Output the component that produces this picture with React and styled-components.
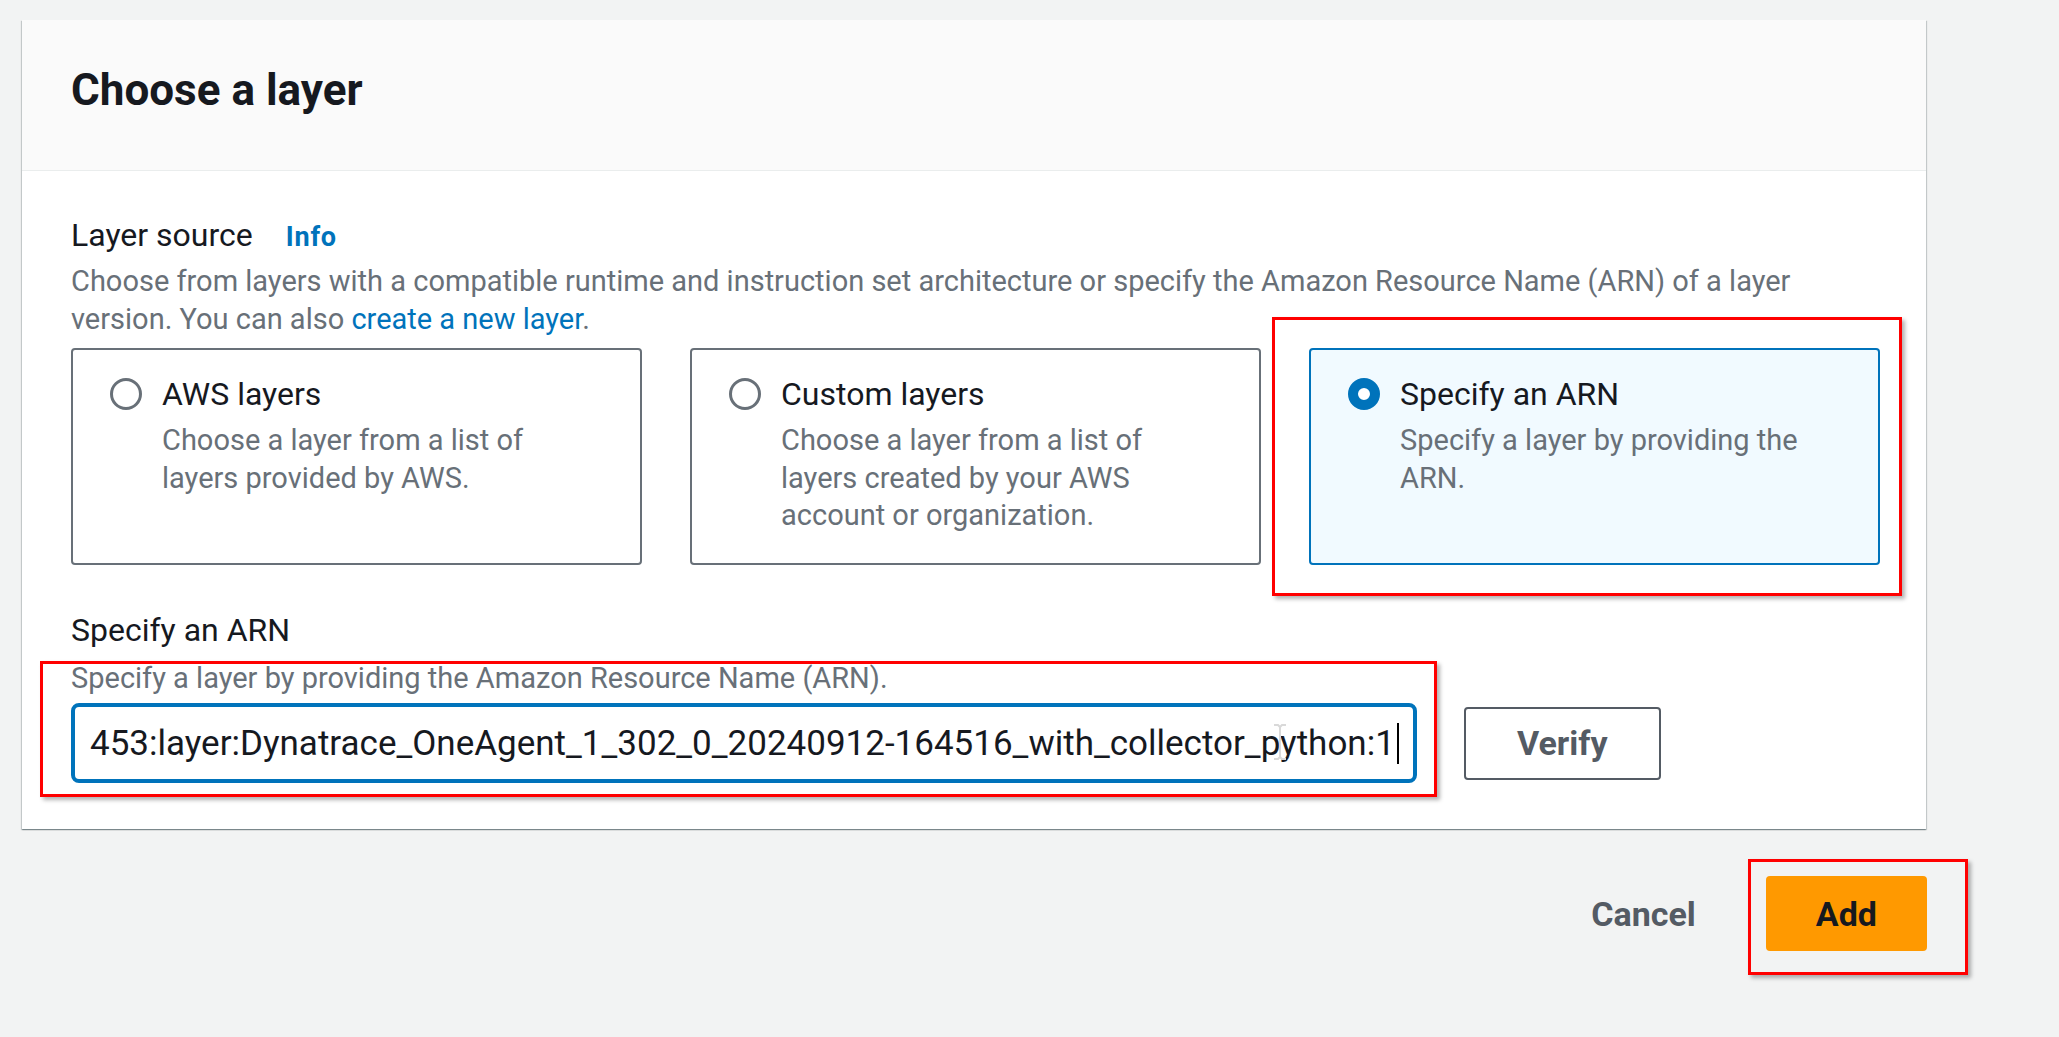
import React from 'react';
import styled, { createGlobalStyle } from 'styled-components';

const GlobalStyle = createGlobalStyle`
  html, body { margin: 0; padding: 0; background: #f2f3f3; }
  body {
    font-family: Roboto, "Noto Sans", "Liberation Sans", Arial, sans-serif;
    color: #16191f;
    -webkit-font-smoothing: antialiased;
  }
  *, *::before, *::after { box-sizing: border-box; }
`;

const Page = styled.div`
  width: 2059px;
  min-height: 1037px;
  padding: 20px 0 0 22px;
`;

const Modal = styled.section`
  width: 1904px;
  background: #ffffff;
  box-shadow: 0 1px 1px 0 rgba(0, 28, 36, 0.3), 1px 1px 1px 0 rgba(0, 28, 36, 0.15),
    -1px 1px 1px 0 rgba(0, 28, 36, 0.15);
`;

const Header = styled.header`
  background: #fafafa;
  border-bottom: 1px solid #eaeded;
  padding: 44px 49px 54px;
`;

const Title = styled.h2`
  margin: 0;
  font-size: 44px;
  line-height: 52px;
  font-weight: 700;
  color: #16191f;
`;

const Body = styled.div`
  padding: 40px 46px 46px 49px;
`;

const Field = styled.div`
  margin-top: ${(p) => p.$gap || 0}px;
`;

const Label = styled.div`
  display: flex;
  align-items: baseline;
  gap: 33px;
  font-size: 32px;
  line-height: 48px;
  color: #16191f;
`;

const InfoLink = styled.a`
  font-size: 27px;
  font-weight: 700;
  letter-spacing: 0.8px;
  color: #0073bb;
  text-decoration: none;
`;

const Description = styled.p`
  margin: ${(p) => p.$gap ?? 2}px 0 0;
  font-size: 29px;
  line-height: 37.5px;
  color: #687078;
`;

const TextLink = styled.a`
  color: #0073bb;
  text-decoration: none;
`;

const Tiles = styled.div`
  display: grid;
  grid-template-columns: repeat(3, 1fr);
  gap: 48px;
  margin-top: 10px;
`;

const Annotated = styled.div`
  position: relative;
  display: flex;
`;

const RedBox = styled.span`
  position: absolute;
  pointer-events: none;
  top: ${(p) => -p.$t}px;
  right: ${(p) => -p.$r}px;
  bottom: ${(p) => -p.$b}px;
  left: ${(p) => -p.$l}px;
  border: 3px solid #ff0000;
  box-shadow: 3px 3px 4px rgba(0, 0, 0, 0.3);
  z-index: 2;
`;

const Tile = styled.div`
  flex: 1;
  display: flex;
  align-items: flex-start;
  gap: 20px;
  padding: 20px 20px 28px 37px;
  border: 2px solid ${(p) => (p.$selected ? '#0073bb' : '#687078')};
  border-radius: 4px;
  background: ${(p) => (p.$selected ? '#f1faff' : '#ffffff')};
`;

const RadioSlot = styled.span`
  flex: none;
  height: 48px;
  display: flex;
  align-items: center;
`;

const Radio = styled.span`
  width: 32px;
  height: 32px;
  border-radius: 50%;
  background: #ffffff;
  border: ${(p) => (p.$checked ? '10px solid #0073bb' : '3px solid #687078')};
`;

const TileText = styled.div`
  max-width: 425px;
`;

const TileTitle = styled.div`
  font-size: 32px;
  line-height: 48px;
  color: #16191f;
`;

const TileDesc = styled.div`
  margin-top: 4px;
  font-size: 29px;
  line-height: 37.5px;
  color: #687078;
`;

const InputRow = styled.div`
  display: grid;
  grid-template-columns: 1346px auto;
  gap: 47px;
  align-items: center;
  justify-content: start;
  margin-top: 6px;
`;

const InputBox = styled.div`
  position: relative;
  flex: 1;
  height: 80px;
  border: 4px solid #0073bb;
  border-radius: 8px;
  background: #ffffff;
  display: flex;
  align-items: center;
  padding: 0 15px;
  font-size: 35px;
  color: #16191f;
  white-space: nowrap;
  overflow: hidden;
`;

const Caret = styled.span`
  display: inline-block;
  flex: none;
  width: 2px;
  height: 41px;
  margin-left: 2px;
  background: #000000;
`;

const IBeam = styled.svg`
  position: absolute;
  left: 1197px;
  top: 17px;
`;

const OutlineButton = styled.button`
  height: 73px;
  padding: 0 51px;
  border: 2px solid #545b64;
  border-radius: 4px;
  background: #ffffff;
  font-family: inherit;
  font-size: 34px;
  font-weight: 700;
  color: #545b64;
  cursor: pointer;
`;

const Footer = styled.div`
  width: 1905px;
  margin-top: 47px;
  display: flex;
  justify-content: flex-end;
  align-items: center;
  gap: 20px;
`;

const LinkButton = styled.button`
  height: 75px;
  padding: 0 50px;
  border: none;
  background: transparent;
  font-family: inherit;
  font-size: 34px;
  font-weight: 700;
  color: #545b64;
  cursor: pointer;
`;

const PrimaryButton = styled.button`
  height: 75px;
  padding: 0 50px;
  border: none;
  border-radius: 4px;
  background: #ff9900;
  font-family: inherit;
  font-size: 34px;
  font-weight: 700;
  color: #16191f;
  cursor: pointer;
`;

const tiles = [
  {
    title: 'AWS layers',
    desc: 'Choose a layer from a list of layers provided by AWS.',
  },
  {
    title: 'Custom layers',
    desc: 'Choose a layer from a list of layers created by your AWS account or organization.',
  },
  {
    title: 'Specify an ARN',
    desc: 'Specify a layer by providing the ARN.',
    selected: true,
  },
];

function LayerTile({ title, desc, selected }) {
  return (
    <Tile $selected={selected}>
      <RadioSlot>
        <Radio $checked={selected} />
      </RadioSlot>
      <TileText>
        <TileTitle>{title}</TileTitle>
        <TileDesc>{desc}</TileDesc>
      </TileText>
    </Tile>
  );
}

export default function App() {
  return (
    <>
      <GlobalStyle />
      <Page>
        <Modal>
          <Header>
            <Title>Choose a layer</Title>
          </Header>
          <Body>
            <Field>
              <Label>
                <span>Layer source</span>
                <InfoLink href="#">Info</InfoLink>
              </Label>
              <Description>
                Choose from layers with a compatible runtime and instruction set architecture or
                specify the Amazon Resource Name (ARN) of a layer version. You can also{' '}
                <TextLink href="#">create a new layer</TextLink>.
              </Description>
              <Tiles>
                {tiles.map((t) => (
                  <Annotated key={t.title}>
                    <LayerTile {...t} />
                    {t.selected && <RedBox $t={31} $r={22} $b={31} $l={37} />}
                  </Annotated>
                ))}
              </Tiles>
            </Field>
            <Field $gap={41}>
              <Label>
                <span>Specify an ARN</span>
              </Label>
              <Description $gap={6}>
                Specify a layer by providing the Amazon Resource Name (ARN).
              </Description>
              <InputRow>
                <Annotated>
                  <InputBox role="textbox">
                    <span>453:layer:Dynatrace_OneAgent_1_302_0_20240912-164516_with_collector_python:1</span>
                    <Caret />
                    <IBeam width="16" height="36" viewBox="0 0 16 36">
                      <path
                        d="M2 1h4l2 2 2-2h4M8 3v30M2 35h4l2-2 2 2h4"
                        fill="none"
                        stroke="#d9d9d9"
                        strokeWidth="2"
                      />
                    </IBeam>
                  </InputBox>
                  <RedBox $t={42} $r={20} $b={14} $l={31} />
                </Annotated>
                <OutlineButton>Verify</OutlineButton>
              </InputRow>
            </Field>
          </Body>
        </Modal>
        <Footer>
          <LinkButton>Cancel</LinkButton>
          <Annotated>
            <PrimaryButton>Add</PrimaryButton>
            <RedBox $t={17} $r={41} $b={24} $l={18} />
          </Annotated>
        </Footer>
      </Page>
    </>
  );
}
